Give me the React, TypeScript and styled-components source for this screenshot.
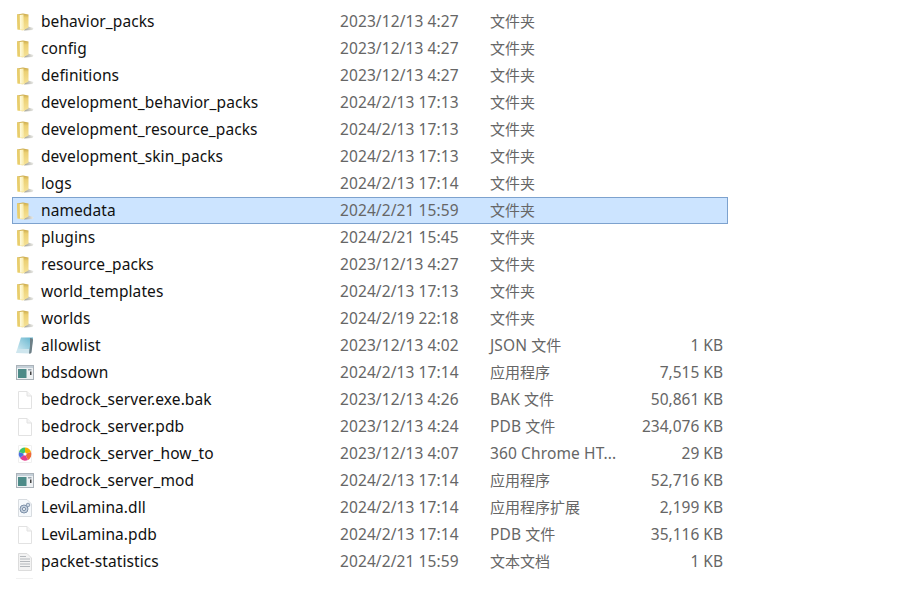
import React from "react";
import styled, { createGlobalStyle } from "styled-components";

const Global = createGlobalStyle`
  html, body { margin: 0; padding: 0; background: #fff; overflow: hidden; }
`;

const Page = styled.div`
  width: 911px;
  height: 603px;
  overflow: hidden;
  padding: 8px 0 0 12px;
  box-sizing: border-box;
  background: #fff;
  font-family: "Noto Sans", "Noto Sans CJK SC", sans-serif;
  font-size: 15px;
`;

const List = styled.div`
  width: 716px;
  display: flex;
  flex-direction: column;
`;

const Row = styled.div<{ $selected?: boolean }>`
  display: grid;
  grid-template-columns: 28px 299px 150px 1fr auto;
  align-items: center;
  height: 27px;
  box-sizing: border-box;
  padding-right: 4px;
  border: 1px solid ${(p) => (p.$selected ? "#7da2ce" : "transparent")};
  background: ${(p) => (p.$selected ? "#cce4ff" : "transparent")};
  line-height: 25px;
  white-space: nowrap;
`;

const IconCell = styled.span`
  display: flex;
  align-items: center;
  padding-left: 2px;
  filter: blur(0.35px);
`;

const Name = styled.span`
  color: #111;
  font-size: 15.5px;
  letter-spacing: 0.08px;
`;

const DateText = styled.span`
  color: #666;
  font-size: 15.5px;
  letter-spacing: 0.1px;
`;

const TypeText = styled.span`
  color: #666;
`;

const Latin = styled.span`
  font-size: 15.5px;
  letter-spacing: 0.12px;
`;

const Size = styled.span`
  color: #666;
  font-size: 15.5px;
  text-align: right;
`;

const Stub = styled.div`
  height: 22px;
  padding: 3px 0 0 4px;
`;

const S = 20;

const Folder = () => (
  <svg width={S} height={S} viewBox="0 0 20 20">
    <defs>
      <linearGradient id="fb" x1="0" x2="0" y1="0" y2="1">
        <stop offset="0" stopColor="#c9a84a" />
        <stop offset="0.25" stopColor="#ecd074" />
        <stop offset="1" stopColor="#f6e39a" />
      </linearGradient>
      <linearGradient id="ff" x1="0" x2="1" y1="0" y2="0">
        <stop offset="0" stopColor="#fffde6" />
        <stop offset="1" stopColor="#f8e9a6" />
      </linearGradient>
      <linearGradient id="fs" x1="0" x2="1" y1="0" y2="0">
        <stop offset="0" stopColor="#9c9c92" />
        <stop offset="1" stopColor="#ecece8" />
      </linearGradient>
    </defs>
    <path d="M11 14 L18.5 16 L17.5 18 L9 18.5 Z" fill="url(#fs)" />
    <path d="M2 2.5 L8 1.5 L13.5 2.5 L13.5 15.5 L8 18.5 L2.5 17.5 Z" fill="url(#fb)" />
    <path d="M4.5 3 L8.5 2.5 L9 17.5 L5 17.5 Z" fill="url(#ff)" />
    <path d="M2 2.5 L4.5 3 L5 17.5 L2.5 17.5 Z" fill="#e8cd6c" />
  </svg>
);

const Blank = () => (
  <svg width={S} height={S} viewBox="0 0 20 20">
    <path d="M3.5 1.5 H12 L16.5 6 V18.5 H3.5 Z" fill="#fff" stroke="#e2e2e2" />
    <path d="M12 1.5 V6 H16.5" fill="#f4f4f4" stroke="#e2e2e2" />
  </svg>
);

const Exe = () => (
  <svg width={S} height={S} viewBox="0 0 20 20">
    <rect x="1.5" y="2.5" width="17" height="14" fill="#eef1f3" stroke="#aab2b9" />
    <rect x="2" y="3" width="16" height="2" fill="#c5d0d8" />
    <rect x="3" y="6" width="8.5" height="9" fill="#4d8b88" />
    <rect x="13" y="6" width="3.5" height="1.5" fill="#9aa6b0" />
    <rect x="15" y="8.5" width="1.5" height="3.5" fill="#444" />
  </svg>
);

const Json = () => (
  <svg width={S} height={S} viewBox="0 0 20 20">
    <defs>
      <linearGradient id="jg" x1="0" x2="1" y1="1" y2="0">
        <stop offset="0" stopColor="#dff1f7" />
        <stop offset="1" stopColor="#5fb2cc" />
      </linearGradient>
    </defs>
    <path d="M6 1.5 H18 L16 17 H1 Z" fill="url(#jg)" />
    <path d="M15 2 Q18 2 18 4 L16.5 16.5 Q16 18 14 17.5 Q15.5 10 15 2 Z" fill="#6e7f86" />
    <path d="M1 17 L3 13 H14 L14 17.5 Z" fill="#cfe6ee" />
  </svg>
);

const Chrome360 = () => (
  <svg width={S} height={S} viewBox="0 0 20 20">
    <path d="M3.5 1.5 H16.5 V18.5 H3.5 Z" fill="#fff" stroke="#f0f0f0" />
    <path d="M10 10 L10 3.5 A6.5 6.5 0 0 1 16 8 Z" fill="#f4b400" />
    <path d="M10 10 L16 8 A6.5 6.5 0 0 1 13 16 Z" fill="#f06a35" />
    <path d="M10 10 L13 16 A6.5 6.5 0 0 1 5 14 Z" fill="#e33d8c" />
    <path d="M10 10 L5 14 A6.5 6.5 0 0 1 4 8 Z" fill="#4a6fe0" />
    <path d="M10 10 L4 8 A6.5 6.5 0 0 1 10 3.5 Z" fill="#3fc46a" />
    <circle cx="10" cy="10" r="1.6" fill="#fff" />
  </svg>
);

const Dll = () => (
  <svg width={S} height={S} viewBox="0 0 20 20">
    <path d="M3.5 1.5 H12 L16.5 6 V18.5 H3.5 Z" fill="#f6f9fc" stroke="#d8dce0" />
    <circle cx="9" cy="11" r="4" fill="#c4d0de" stroke="#7d90a8" />
    <circle cx="9" cy="11" r="1.6" fill="#eef2f6" stroke="#7d90a8" />
    <circle cx="13" cy="7" r="1.8" fill="#cdd8e4" stroke="#8a9bb0" />
  </svg>
);

const Txt = () => (
  <svg width={S} height={S} viewBox="0 0 20 20">
    <path d="M3.5 1.5 H12 L16.5 6 V18.5 H3.5 Z" fill="#f3f3f3" stroke="#dcdcdc" />
    <path d="M5 4.5 H11 M5 7 H15 M5 9.5 H15 M5 12 H15 M5 14.5 H15" stroke="#b4b8bc" strokeWidth="1" />
  </svg>
);

type Kind = "folder" | "blank" | "exe" | "json" | "html" | "dll" | "txt";

const icons: Record<Kind, () => React.JSX.Element> = {
  folder: Folder,
  blank: Blank,
  exe: Exe,
  json: Json,
  html: Chrome360,
  dll: Dll,
  txt: Txt,
};

const rows: { kind: Kind; name: string; date: string; type: string; size?: string; selected?: boolean }[] = [
  { kind: "folder", name: "behavior_packs", date: "2023/12/13 4:27", type: "文件夹" },
  { kind: "folder", name: "config", date: "2023/12/13 4:27", type: "文件夹" },
  { kind: "folder", name: "definitions", date: "2023/12/13 4:27", type: "文件夹" },
  { kind: "folder", name: "development_behavior_packs", date: "2024/2/13 17:13", type: "文件夹" },
  { kind: "folder", name: "development_resource_packs", date: "2024/2/13 17:13", type: "文件夹" },
  { kind: "folder", name: "development_skin_packs", date: "2024/2/13 17:13", type: "文件夹" },
  { kind: "folder", name: "logs", date: "2024/2/13 17:14", type: "文件夹" },
  { kind: "folder", name: "namedata", date: "2024/2/21 15:59", type: "文件夹", selected: true },
  { kind: "folder", name: "plugins", date: "2024/2/21 15:45", type: "文件夹" },
  { kind: "folder", name: "resource_packs", date: "2023/12/13 4:27", type: "文件夹" },
  { kind: "folder", name: "world_templates", date: "2024/2/13 17:13", type: "文件夹" },
  { kind: "folder", name: "worlds", date: "2024/2/19 22:18", type: "文件夹" },
  { kind: "json", name: "allowlist", date: "2023/12/13 4:02", type: "JSON 文件", size: "1 KB" },
  { kind: "exe", name: "bdsdown", date: "2024/2/13 17:14", type: "应用程序", size: "7,515 KB" },
  { kind: "blank", name: "bedrock_server.exe.bak", date: "2023/12/13 4:26", type: "BAK 文件", size: "50,861 KB" },
  { kind: "blank", name: "bedrock_server.pdb", date: "2023/12/13 4:24", type: "PDB 文件", size: "234,076 KB" },
  { kind: "html", name: "bedrock_server_how_to", date: "2023/12/13 4:07", type: "360 Chrome HT...", size: "29 KB" },
  { kind: "exe", name: "bedrock_server_mod", date: "2024/2/13 17:14", type: "应用程序", size: "52,716 KB" },
  { kind: "dll", name: "LeviLamina.dll", date: "2024/2/13 17:14", type: "应用程序扩展", size: "2,199 KB" },
  { kind: "blank", name: "LeviLamina.pdb", date: "2024/2/13 17:14", type: "PDB 文件", size: "35,116 KB" },
  { kind: "txt", name: "packet-statistics", date: "2024/2/21 15:59", type: "文本文档", size: "1 KB" },
];

const typeParts = (type: string) =>
  type.split(/([\x20-\x7e]+)/).map((part, i) => (i % 2 ? <Latin key={i}>{part}</Latin> : part));

export default function App() {
  return (
    <Page>
      <Global />
      <List>
        {rows.map((r) => {
          const Icon = icons[r.kind];
          return (
            <Row key={r.name} $selected={r.selected}>
              <IconCell>
                <Icon />
              </IconCell>
              <Name>{r.name}</Name>
              <DateText>{r.date}</DateText>
              <TypeText>{typeParts(r.type)}</TypeText>
              <Size>{r.size}</Size>
            </Row>
          );
        })}
        <Stub>
          <svg width="20" height="22" viewBox="0 0 20 22">
            <path d="M0 0.5 H17 M-3 0 V22" stroke="#f1f1f1" strokeWidth="1" fill="none" />
          </svg>
        </Stub>
      </List>
    </Page>
  );
}
